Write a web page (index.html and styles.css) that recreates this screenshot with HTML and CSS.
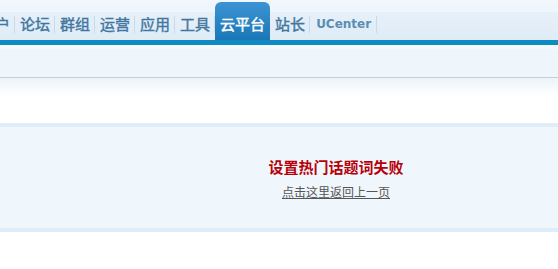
FILE: index.html
```html
<!DOCTYPE html>
<html lang="zh-CN">
<head>
<meta charset="utf-8">
<title>设置热门话题词失败</title>
<link rel="stylesheet" href="styles.css">
</head>
<body>
<div class="header">
  <ul class="nav">
    <li><a>门户</a><span class="sep"></span></li>
    <li><a>论坛</a><span class="sep"></span></li>
    <li><a>群组</a><span class="sep"></span></li>
    <li><a>运营</a><span class="sep"></span></li>
    <li><a>应用</a><span class="sep"></span></li>
    <li><a>工具</a><span class="sep"></span></li>
    <li class="active"><a>云平台</a></li>
    <li><a>站长</a><span class="sep"></span></li>
    <li class="uc"><a>UCenter</a><span class="sep"></span></li>
  </ul>
</div>
<div class="bluebar"></div>
<div class="subnav"></div>
<div class="shade"></div>
<div class="msgbox">
  <div class="msg">
    <h3>设置热门话题词失败</h3>
    <p><a class="back" href="#">点击这里返回上一页</a></p>
  </div>
</div>
</body>
</html>
```
FILE: styles.css
```css
html, body {
  margin: 0;
  padding: 0;
  background: #fff;
  overflow: hidden;
  font-family: "Noto Sans CJK SC", "Liberation Sans", sans-serif;
}

.header {
  height: 40px;
  background: linear-gradient(#f1f7fc 0, #eef5fb 12px, #e6f0f9 12px, #dfebf6 40px);
  display: flex;
  align-items: flex-end;
}

.nav {
  list-style: none;
  margin: 0 0 0 -25px;
  padding: 0;
  display: flex;
  align-items: flex-end;
  height: 38px;
}

.nav li {
  height: 38px;
  display: flex;
  align-items: center;
  padding: 6px 0 0 5px;
  box-sizing: border-box;
}

.nav li a {
  font-size: 15px;
  line-height: 18px;
  font-weight: normal;
  -webkit-text-stroke: 0.4px currentColor;
  color: #41779f;
  white-space: nowrap;
}

.nav .sep {
  display: block;
  width: 1px;
  height: 17px;
  margin-left: 4px;
  background: #c9dae8;
}

.nav li.active {
  padding: 6px 5px 0 5px;
  border-radius: 6px 6px 0 0;
  background: linear-gradient(#3d93d3, #1a77b6);
}

.nav li.active a {
  color: #fff;
}

.nav li.uc {
  padding-left: 6px;
}

.nav li.uc a {
  font-family: "DejaVu Sans", sans-serif;
  font-size: 12px;
  font-weight: bold;
  -webkit-text-stroke: 0;
  color: #5a8db3;
}

.nav li.uc .sep {
  margin-left: 5px;
}

.bluebar {
  height: 5px;
  background: #0f8bc3;
}

.subnav {
  height: 32px;
  background: linear-gradient(#fbfdfe 0, #eff6fb 5px, #eef5fb 100%);
  border-bottom: 1px solid #c4cfd9;
}

.shade {
  height: 18px;
  background: linear-gradient(#edf3f8, #ffffff);
  margin-bottom: 27px;
}

.msgbox {
  border-top: 4px solid #deedf8;
  border-bottom: 4px solid #deedf8;
  background: #f0f7fc;
  height: 101px;
}

.msg {
  margin-left: 114px;
  text-align: center;
  padding-top: 30px;
}

.msg h3 {
  margin: 0;
  font-size: 15px;
  line-height: 20px;
  font-weight: bold;
  color: #b8000a;
}

.msg p {
  margin: 7px 0 0;
  font-size: 12px;
  line-height: 16px;
}

.back {
  color: #555;
  text-decoration: underline;
}
```
